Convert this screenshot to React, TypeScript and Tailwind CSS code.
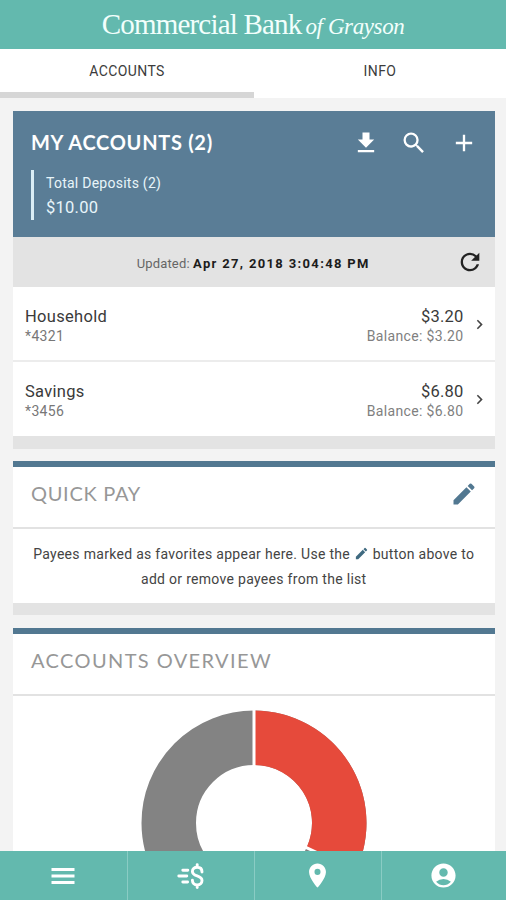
import type { ReactNode } from "react";
import {
  MdAccountCircle,
  MdAdd,
  MdChevronRight,
  MdEdit,
  MdFileDownload,
  MdPlace,
  MdRefresh,
  MdSearch,
} from "react-icons/md";

const accounts = [
  { name: "Household", mask: "*4321", amount: "$3.20" },
  { name: "Savings", mask: "*3456", amount: "$6.80" },
];

function Header() {
  return (
    <header className="flex h-[49px] shrink-0 items-center justify-center bg-[#63b9ae] font-['Liberation_Serif',serif] text-[#f2fffc]">
      <h1 className="flex items-baseline gap-[4px] whitespace-nowrap leading-none">
        <span className="text-[29px] tracking-[-0.8px]">Commercial Bank</span>
        <span className="text-[23px] italic tracking-[-0.4px]">of Grayson</span>
      </h1>
    </header>
  );
}

function Tabs() {
  return (
    <nav className="grid h-[49px] shrink-0 grid-cols-[254px_252px] bg-white text-center text-[14px] leading-[44px] tracking-[0.4px] text-[#3c3c3c]">
      <div className="h-[49px] border-b-[6px] border-[#d6d6d6]">ACCOUNTS</div>
      <div>INFO</div>
    </nav>
  );
}

function AccountRow({ name, mask, amount }: (typeof accounts)[number]) {
  return (
    <li className="flex h-[75px] items-center border-b-2 border-[#ececec] pl-[12px] pr-[6px] pt-[3px] last:h-[74px] last:border-b-0 last:pt-[2px]">
      <div className="flex-1 pt-px">
        <div className="text-[16.5px] leading-[20px] tracking-[0.3px] text-[#3a3a3a]">{name}</div>
        <div className="text-[14px] leading-[18px] tracking-[0.35px] text-[#777]">{mask}</div>
      </div>
      <div className="pt-px text-right">
        <div className="text-[16.5px] leading-[20px] tracking-[0.2px] text-[#3a3a3a]">{amount}</div>
        <div className="text-[14px] leading-[18px] tracking-[0.35px] text-[#808080]">Balance: {amount}</div>
      </div>
      <MdChevronRight className="mb-[2px] ml-[6px] size-[19px] text-[#444]" />
    </li>
  );
}

function MyAccounts() {
  return (
    <section className="border-b-[13px] border-[#e3e3e3] bg-white">
      <div className="h-[126px] bg-[#5a7d96] pl-[18px] text-white">
        <div className="flex h-[59px] items-center pr-[18px] pt-[4px]">
          <h2 className="flex-1 pb-px font-['Lato',sans-serif] text-[20px] font-bold tracking-[0.7px]">
            MY ACCOUNTS (2)
          </h2>
          <MdFileDownload className="mr-[20px] size-[28px]" />
          <MdSearch className="mr-[22px] size-[28px]" />
          <MdAdd className="-mr-[1px] size-[28px]" />
        </div>
        <div className="h-[50px] border-l-[3px] border-[#d9edf5] pl-[12px] text-[#e8f5fa]">
          <div className="pt-[3px] text-[14px] leading-[20px] tracking-[0.25px]">Total Deposits (2)</div>
          <div className="pt-[5px] text-[16.5px] leading-[20px] tracking-[0.25px]">$10.00</div>
        </div>
      </div>
      <div className="flex h-[50px] items-center bg-[#e3e3e3] pl-[38px] pr-[11px] text-[13px]">
        <div className="flex-1 pt-[3px] text-center tracking-[0.15px] text-[#666]">
          Updated: <b className="tracking-[1.34px] text-[#1c1c1c]">Apr 27, 2018 3:04:48 PM</b>
        </div>
        <MdRefresh className="size-[28px] text-[#222]" />
      </div>
      <ul>
        {accounts.map((a) => (
          <AccountRow key={a.name} {...a} />
        ))}
      </ul>
    </section>
  );
}

function Card({ title, action, children }: { title: ReactNode; action?: ReactNode; children: ReactNode }) {
  return (
    <section className="border-t-[6px] border-[#527891] bg-white">
      <div className="flex h-[62px] items-center border-b-2 border-[#e2e2e2] pb-[7px] pl-[18px] pr-[17px] font-['Lato',sans-serif] text-[20px] text-[#979797]">
        {title}
        {action}
      </div>
      {children}
    </section>
  );
}

function Donut() {
  return (
    <svg width="226" height="226" viewBox="-113 -113 226 226" className="mx-auto mt-[14px] block">
      <circle r="85.25" fill="none" stroke="#838383" strokeWidth="54.5" />
      <path d="M0-112.5A112.5 112.5 0 0 1 101.8 47.9L52.5 24.7A58 58 0 0 0 0-58Z" fill="#e64a3b" />
      <path d="M0-50V-114M46 21.6L104 48.9" stroke="#fff" strokeWidth="3" />
    </svg>
  );
}

function MenuIcon() {
  return (
    <svg width="24" height="18" viewBox="0 0 24 18" stroke="currentColor" strokeWidth="3">
      <path d="M0.5 2.5h23M0.5 9h23M0.5 15.5h23" />
    </svg>
  );
}

function PayIcon() {
  return (
    <svg width="27" height="28" viewBox="0 0 27 28" fill="none" stroke="currentColor" strokeLinecap="round">
      <path d="M5.8 8.2h5M1.8 14h8M5.8 20h4.8" strokeWidth="2.9" />
      <path d="M25 10c0-3.2-2-4.8-4.8-4.8s-4.8 1.6-4.8 4.2c0 5.5 9.6 3.4 9.6 9 0 2.8-2 4.5-4.8 4.5s-4.8-1.6-4.8-4.6M20.2 2.6v2.4M20.2 23v2.6" strokeWidth="2.9" />
    </svg>
  );
}

function BottomBar() {
  return (
    <nav className="grid h-[49px] shrink-0 grid-cols-[128px_127px_127px_124px] divide-x divide-[#8accc4] bg-[#63b9ae] text-white *:flex *:items-center *:justify-center *:pr-px">
      <div>
        <MenuIcon />
      </div>
      <div>
        <PayIcon />
      </div>
      <div>
        <MdPlace className="size-[29px]" />
      </div>
      <div>
        <MdAccountCircle className="size-[29px]" />
      </div>
    </nav>
  );
}

export default function App() {
  return (
    <div className="flex h-[900px] w-[506px] flex-col overflow-hidden bg-[#f3f3f3] font-['Roboto',sans-serif]">
      <Header />
      <Tabs />
      <main className="flex min-h-0 flex-1 flex-col overflow-hidden pl-[13px] pr-[11.5px] pt-[13px] *:shrink-0">
        <MyAccounts />
        <div className="mt-[12px]">
          <Card
            title={<h2 className="flex-1 pb-[2px] tracking-[0.7px]">QUICK PAY</h2>}
            action={<MdEdit className="size-[28px] text-[#527891]" />}
          >
            <div className="h-[86px] border-b-[12px] border-[#e3e3e3] pt-[13px] text-center text-[14px] leading-[25px] tracking-[0.3px] text-[#444]">
              Payees marked as favorites appear here. Use the{" "}
              <MdEdit className="inline size-[15px] -translate-y-[2px] text-[#3f6a80]" /> button above to
              <br />
              add or remove payees from the list
            </div>
          </Card>
        </div>
        <div className="mt-[13px]">
          <Card title={<h2 className="pb-[2px] tracking-[1.4px]">ACCOUNTS OVERVIEW</h2>}>
            <Donut />
          </Card>
        </div>
      </main>
      <BottomBar />
    </div>
  );
}
